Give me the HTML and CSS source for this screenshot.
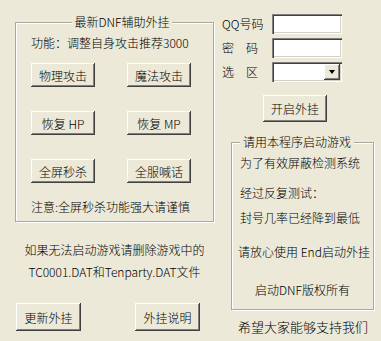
FILE: index.html
```html
<!DOCTYPE html>
<html lang="zh-CN">
<head>
<meta charset="utf-8">
<title>最新DNF辅助外挂</title>
<link rel="stylesheet" href="styles.css">
</head>
<body>
<div class="window">
  <div class="col-left">
    <fieldset class="group group-main">
      <legend class="group-title centered">最新DNF辅助外挂</legend>
      <div class="func">功能：调整自身攻击推荐3000</div>
      <div class="btn-grid">
        <button class="btn btn-small">物理攻击</button>
        <button class="btn btn-small">魔法攻击</button>
        <button class="btn btn-small">恢复 HP</button>
        <button class="btn btn-small">恢复 MP</button>
        <button class="btn btn-small">全屏秒杀</button>
        <button class="btn btn-small">全服喊话</button>
      </div>
      <div class="note">注意:全屏秒杀功能强大请谨慎</div>
    </fieldset>
    <div class="tip">
      <div>如果无法启动游戏请删除游戏中的</div>
      <div>TC0001.DAT和Tenparty.DAT文件</div>
    </div>
    <div class="bottom-btns">
      <button class="btn btn-bottom">更新外挂</button>
      <button class="btn btn-bottom">外挂说明</button>
    </div>
  </div>
  <div class="col-right">
    <div class="form">
      <label class="lbl">QQ号码</label>
      <input class="field" type="text">
      <label class="lbl">密　码</label>
      <input class="field" type="password">
      <label class="lbl">选　区</label>
      <div class="field combo"><span class="drop"><span class="arrow"></span></span></div>
    </div>
    <button class="btn btn-start">开启外挂</button>
    <fieldset class="group group-info">
      <legend class="group-title left">请用本程序启动游戏</legend>
      <div class="info">
        <div class="line l1">为了有效屏蔽检测系统</div>
        <div class="line l2">经过反复测试：</div>
        <div class="line l3">封号几率已经降到最低</div>
        <div class="line l4">请放心使用 End启动外挂</div>
        <div class="line l5 center">启动DNF版权所有</div>
      </div>
    </fieldset>
    <div class="support">希望大家能够支持我们</div>
  </div>
</div>
</body>
</html>
```
FILE: styles.css
```css
* { box-sizing: border-box; }
html, body {
  margin: 0;
  padding: 0;
  background: #ECE9D8;
}
body {
  font-family: "Noto Sans CJK SC", "Noto Sans", sans-serif;
  font-size: 12px;
  font-weight: 300;
  color: #000;
}
.window {
  width: 381px;
  height: 341px;
  display: grid;
  grid-template-columns: 220px 161px;
  overflow: hidden;
}
.col-left {
  padding-top: 14px;
  padding-left: 15px;
}
.col-right {
  padding-top: 14px;
}

/* group boxes (etched) */
.group {
  margin: 0;
  padding: 0;
  min-inline-size: 0;
  border: 1px solid #a8a8a0;
  box-shadow: 1px 1px 0 #fff, inset 1px 1px 0 #fff;
}
.group-title {
  padding: 0 3px;
  line-height: 16px;
  height: 16px;
  background: #ECE9D8;
}
.group-title.centered { margin: 0 auto; }
.group-title.left { margin-left: 8px; }

.group-main {
  width: 199px;
  padding: 0 0 6px 15px;
}
.func {
  margin-top: 5px;
  line-height: 16px;
  white-space: nowrap;
}
.btn-grid {
  margin-top: 12px;
  display: grid;
  grid-template-columns: 64px 64px;
  grid-auto-rows: 24px;
  column-gap: 32px;
  row-gap: 24px;
}
.note {
  margin-top: 16px;
  line-height: 16px;
  white-space: nowrap;
}

/* buttons */
.btn {
  font: inherit;
  color: #000;
  background: #ECE9D8;
  border: none;
  padding: 0;
  margin: 0;
  box-shadow: inset -1px -1px 0 #404040, inset 1px 1px 0 #fff, inset -2px -2px 0 #808080;
  white-space: nowrap;
}
.btn-small { width: 64px; height: 24px; }

.tip {
  width: 199px;
  margin-top: 17px;
  line-height: 22px;
  text-align: center;
  white-space: nowrap;
}
.bottom-btns {
  margin-top: 20px;
  margin-left: 1px;
  display: flex;
  gap: 54px;
}
.btn-bottom { width: 65px; height: 28px; }

/* right column form */
.form {
  padding-left: 2px;
  display: grid;
  grid-template-columns: 36px 70px;
  grid-auto-rows: 20px;
  column-gap: 14px;
  row-gap: 4px;
  align-items: center;
}
.lbl { white-space: nowrap; line-height: 16px; }
.field {
  width: 70px;
  height: 20px;
  border: none;
  margin: 0;
  padding: 0 3px;
  background: #fff;
  font: inherit;
  box-shadow: inset 1px 1px 0 #808080, inset 2px 2px 0 #404040, inset -1px -1px 0 #fff, inset -2px -2px 0 #D4D0C8;
  outline: none;
}
.combo {
  display: flex;
  justify-content: flex-end;
  align-items: stretch;
  padding: 2px;
}
.drop {
  width: 16px;
  background: #ECE9D8;
  box-shadow: inset -1px -1px 0 #404040, inset 1px 1px 0 #fff, inset -2px -2px 0 #808080;
  display: flex;
  align-items: center;
  justify-content: center;
}
.arrow {
  width: 0;
  height: 0;
  border-left: 3.5px solid transparent;
  border-right: 3.5px solid transparent;
  border-top: 4px solid #000;
}
.btn-start {
  display: block;
  margin-top: 13px;
  margin-left: 43px;
  width: 64px;
  height: 27px;
}
.group-info {
  width: 143px;
  margin-top: 12px;
  margin-left: 11px;
}
.info {
  padding: 0 0 11px 8px;
}
.line {
  line-height: 16px;
  white-space: nowrap;
}
.line.center { text-align: center; padding-right: 8px; }
.l1 { margin-top: 5px; }
.l2 { margin-top: 14px; }
.l3 { margin-top: 9px; }
.l4 { margin-top: 18px; margin-left: -2px; }
.l5 { margin-top: 22px; }
.support {
  margin-top: 9px;
  padding-left: 18px;
  line-height: 16px;
  font-size: 13px;
  white-space: nowrap;
}
```
